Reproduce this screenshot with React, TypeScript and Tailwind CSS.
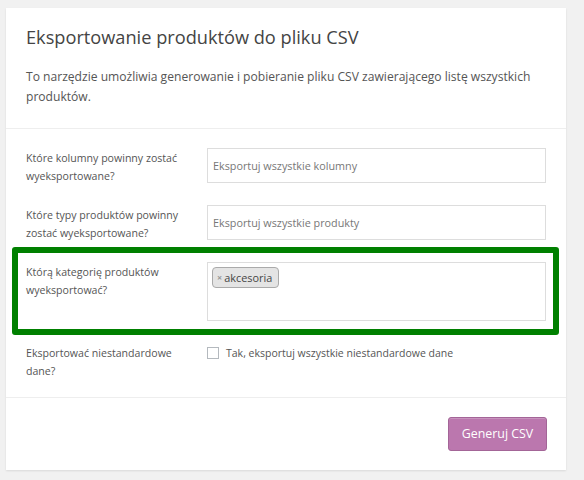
import React from "react";

function App() {
  return (
    <div className="min-h-[480px] w-[584px] bg-[#f1f1f1] pt-[8px] pl-[6px] font-['Open_Sans',sans-serif] text-[#444]">
      <div className="w-[560px] h-[462px] bg-white shadow-[0_1px_2px_rgba(0,0,0,0.1)] flex flex-col">
        {/* Header */}
        <div className="px-[20px] pt-[17px] pb-[21px] border-b border-[#eee]">
          <h2 className="text-[18.2px] leading-[24px] text-[#444]">
            Eksportowanie produktów do pliku CSV
          </h2>
          <p className="mt-[18px] text-[12.1px] leading-[20px] text-[#555]">
            To narzędzie umożliwia generowanie i pobieranie pliku CSV zawierającego listę wszystkich
            produktów.
          </p>
        </div>

        {/* Form rows */}
        <div className="px-[20px] pt-[19px] pb-[17px] border-b border-[#eee] flex flex-col gap-[20px] text-[10.6px] leading-[18px] text-[#555]">
          <div className="flex gap-[21px]">
            <label className="w-[160px] shrink-0 pt-[1px]">Które kolumny powinny zostać wyeksportowane?</label>
            <div className="flex-1 h-[35px] border border-[#ddd] px-[5px] flex items-center text-[10.8px] text-[#777]">
              Eksportuj wszystkie kolumny
            </div>
          </div>
          <div className="flex gap-[21px]">
            <label className="w-[160px] shrink-0 pt-[1px]">Które typy produktów powinny zostać wyeksportowane?</label>
            <div className="flex-1 h-[35px] border border-[#ddd] px-[5px] flex items-center text-[10.8px] text-[#777]">
              Eksportuj wszystkie produkty
            </div>
          </div>
          <div className="-mt-[15px] -mb-[12px] -ml-[14px] -mr-[13px] border-[6px] border-[#008000] rounded-[3px] pt-[9px] pb-[8px] pl-[8px] pr-[7px] flex gap-[21px]">
            <label className="w-[160px] shrink-0 pt-[1px]">Którą kategorię produktów wyeksportować?</label>
            <div className="flex-1 h-[59px] border border-[#ddd] p-[4px]">
              <span className="inline-flex items-center h-[21px] pl-[4px] pr-[6px] gap-[2px] bg-[#e4e4e4] border border-[#aaa] rounded-[4px] text-[10.9px] text-[#444]">
                <span className="text-[#999] text-[9px] font-bold">×</span>
                akcesoria
              </span>
            </div>
          </div>
          <div className="flex gap-[21px]">
            <label className="w-[160px] shrink-0 pt-[1px]">Eksportować niestandardowe dane?</label>
            <div className="flex-1 flex items-start gap-[7px] pt-[4px]">
              <span className="w-[12px] h-[12px] border border-[#b4b9be] bg-white shrink-0"></span>
              <span className="text-[10.5px] leading-[12px]">Tak, eksportuj wszystkie niestandardowe dane</span>
            </div>
          </div>
        </div>

        {/* Footer */}
        <div className="flex justify-end px-[19px] pt-[19px]">
          <button className="w-[99px] h-[34px] bg-[#bb77ae] border border-[#a36597] rounded-[3px] text-white text-[12.4px] shadow-[inset_0_1px_0_rgba(255,255,255,0.2)]">
            Generuj CSV
          </button>
        </div>
      </div>
    </div>
  );
}

export default App;
